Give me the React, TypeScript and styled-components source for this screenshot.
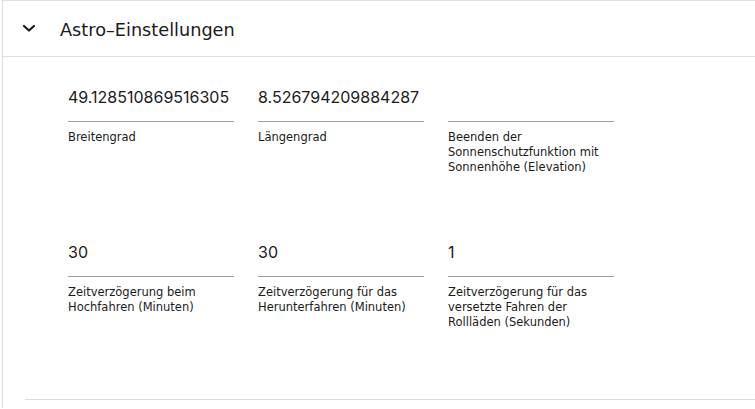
import React from 'react';
import styled, { createGlobalStyle } from 'styled-components';

const GlobalStyle = createGlobalStyle`
  html, body {
    margin: 0;
    padding: 0;
    background: #ffffff;
  }
  body {
    font-family: "DejaVu Sans", "Noto Sans", sans-serif;
    color: #1b1b1b;
  }
`;

const Card = styled.section`
  margin-left: 2px;
  border-left: 1px solid #dcdcdc;
  border-top: 1px solid #e2e2e2;
  background: #fff;
  min-height: 408px;
  box-sizing: border-box;
`;

const Header = styled.button`
  display: flex;
  align-items: center;
  width: 100%;
  height: 56px;
  padding: 3px 0 0 19px;
  border: none;
  border-bottom: 1px solid #e0e0e0;
  background: transparent;
  cursor: pointer;
  text-align: left;
`;

const Chevron = styled.svg`
  width: 14px;
  height: 9px;
  margin: -3px 24px 0 0;
  flex-shrink: 0;
`;

const Title = styled.h2`
  margin: 0;
  font-family: "DejaVu Sans", sans-serif;
  font-size: 17.7px;
  font-weight: 400;
  color: #1b1b1b;
`;

const Content = styled.div`
  padding: 25px 0 69px 65px;
`;

const FieldGrid = styled.div`
  display: grid;
  grid-template-columns: repeat(3, 166px);
  column-gap: 24px;
  row-gap: 62px;
  align-items: start;
`;

const Field = styled.div`
  display: flex;
  flex-direction: column;
`;

const Value = styled.div`
  box-sizing: border-box;
  height: 40px;
  padding-top: 5px;
  line-height: 20px;
  font-family: Inter, "Liberation Sans", sans-serif;
  font-size: 16px;
  color: #1b1b1b;
  border-bottom: 1px solid #9e9e9e;
  white-space: nowrap;
`;

const Label = styled.label`
  margin-top: 8px;
  font-family: "DejaVu Sans", sans-serif;
  font-size: 11.5px;
  line-height: 15px;
  color: #1b1b1b;
  min-height: 45px;
`;

const Divider = styled.hr`
  margin: 0 0 0 22px;
  border: none;
  border-top: 1px solid #dcdcdc;
`;

const fields = [
  { value: '49.128510869516305', label: 'Breitengrad' },
  { value: '8.526794209884287', label: 'Längengrad' },
  { value: '', label: 'Beenden der Sonnenschutzfunktion mit Sonnenhöhe (Elevation)' },
  { value: '30', label: 'Zeitverzögerung beim Hochfahren (Minuten)' },
  { value: '30', label: 'Zeitverzögerung für das Herunterfahren (Minuten)' },
  { value: '1', label: 'Zeitverzögerung für das versetzte Fahren der Rollläden (Sekunden)' },
];

const App = () => {
  return (
    <>
      <GlobalStyle />
      <Card>
        <Header>
          <Chevron viewBox="0 0 14 9">
            <path
              d="M2 2 L7 6.5 L12 2"
              fill="none"
              stroke="#1b1b1b"
              strokeWidth="2.2"
              strokeLinecap="round"
              strokeLinejoin="round"
            />
          </Chevron>
          <Title>Astro–Einstellungen</Title>
        </Header>
        <Content>
          <FieldGrid>
            {fields.map((field, index) => {
              return (
                <Field key={index}>
                  <Value>{field.value}</Value>
                  <Label>{field.label}</Label>
                </Field>
              );
            })}
          </FieldGrid>
        </Content>
        <Divider />
      </Card>
    </>
  );
};

export default App;
